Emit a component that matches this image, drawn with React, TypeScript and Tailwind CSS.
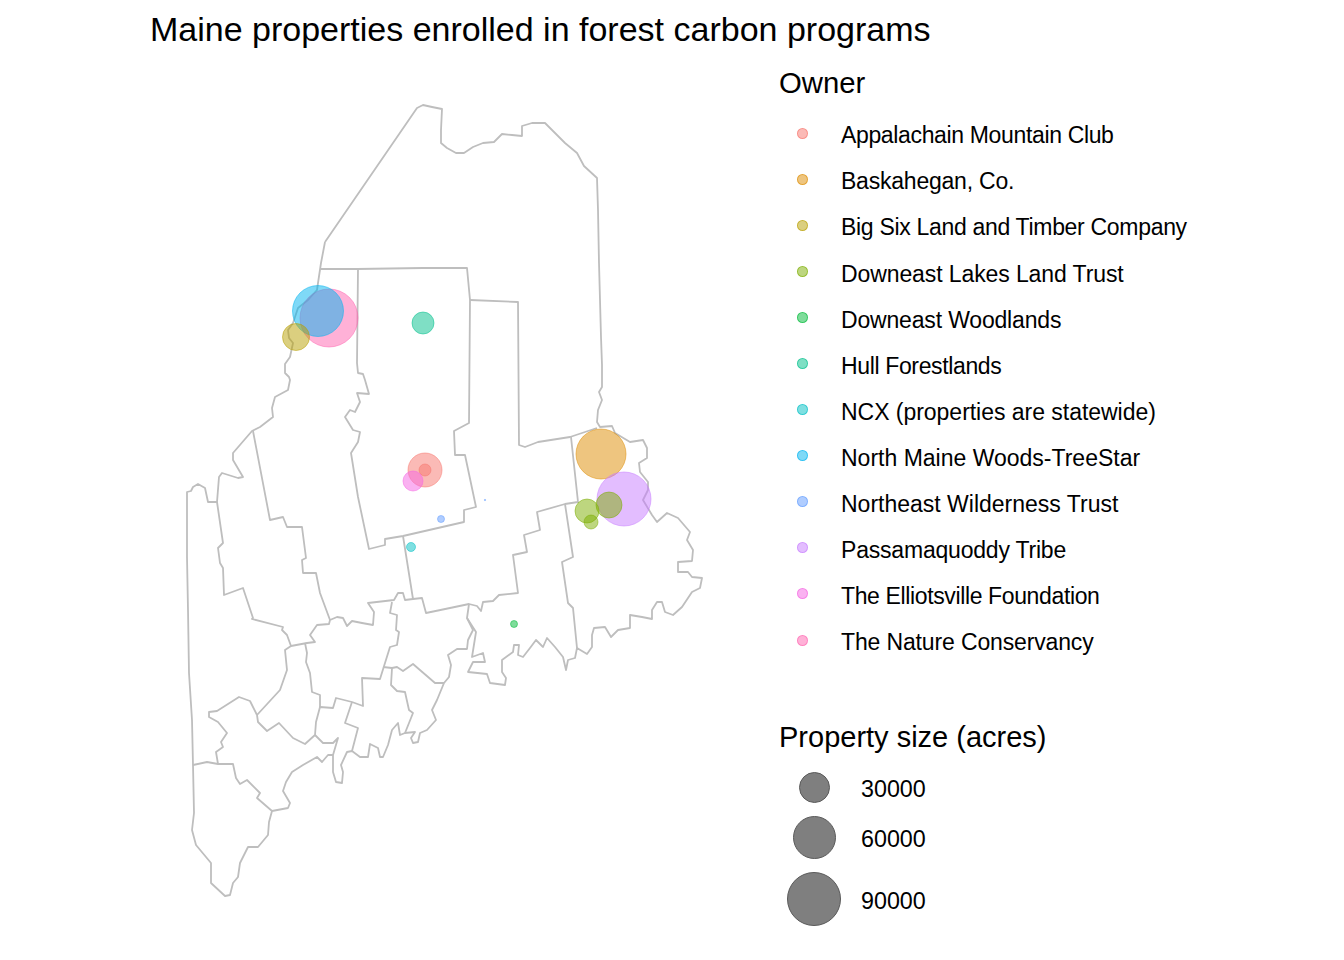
const borders = [
  // state outline, north and east
  "325,242 417,108 423,105 432,107 442,109 441,130 441,143 447,148 456,153 464,153 473,147 483,143 494,142 502,134 512,135 522,136 522,126 532,123 545,123 553,131 565,143 577,153 584,166 597,178 598,210 599,263 601,337 602,365 602,387 599,392 602,400 598,410 597,422 600,427 612,426 615,433 630,442 643,440 647,448 647,458 639,463 640,472 648,482 648,490 643,500 652,515 657,522 667,513 678,518 690,532 687,540 693,550 692,561 678,562 678,572 688,572 692,577 702,578 700,588 692,592 682,607 673,615 665,612 662,602 657,602 652,610 652,619 642,617 630,615 630,628 618,630 611,637 605,627 594,628 592,635 592,647 587,654 577,648 575,658 568,660 566,670 563,657 555,647 547,638 543,647 536,640 530,648 523,657 518,655 519,645 514,645 513,652 502,660 502,672 506,678 505,685 490,683 487,674 468,672 473,662 485,662 483,653 472,657 476,632 467,618 469,604",
  // state outline, west
  "325,242 321,263 318,283 317,290 308,300 298,308 293,323 288,330 289,338 293,343 290,357 285,364 285,373 289,377 290,380 288,390 275,397 272,408 273,417 260,427 252,431 233,453 233,460 243,477 238,478 222,473 219,477 217,502 208,502 205,488 198,484 193,487 191,491 187,492 187,557 188,610 189,673 192,720 193,765 194,813 192,830 196,845 211,863 211,883 225,896 230,895 233,883 238,877 240,863 248,847 258,847 268,835 269,822 272,811 288,808 290,803 283,791 286,782 292,772 303,765 317,757 322,762 328,755 333,755 333,772 336,782 342,783 343,772 341,765 347,752 352,751 360,757 368,757 370,744 378,748 380,757 383,757 388,745 392,730 398,723 400,735 405,733 415,732 411,738 413,743 418,742 420,733 427,730 436,720 432,710 437,700 444,683 449,677 451,665 448,655 457,649 467,649 468,640 473,630 467,618",
  // Somerset and Piscataquis
  "320,269 357,269 423,268 467,268 470,300 469,423 454,431 455,455 465,455 476,507 464,510 464,522 403,536 385,539 385,545 369,549 358,497 351,453 358,442 360,432 353,430 345,417 350,410 355,412 360,402 357,393 369,394 365,380 363,374 358,373 357,363 358,269",
  "470,300 518,302 519,445 525,447 538,442 570,437 597,428",
  "571,437 578,502 565,504 537,512 540,530 524,535 527,552 513,555 518,593 499,595 493,601 483,602 481,611 477,606 469,604 450,608 426,613 422,598 413,599 403,536",
  "565,504 573,557 562,562 568,603 573,608 577,648",
  "413,599 405,600 403,593 398,593 394,600 368,603 374,612 373,625 362,623 352,621 347,626 343,618 337,617 330,620 329,624 317,625 310,635 315,642 307,643 291,646 285,650 287,670 280,690 257,715",
  "253,431 270,520 283,517 287,527 302,527 306,558 302,560 303,573 316,573 320,593 330,620",
  "217,502 223,543 218,548 220,563 223,568 224,595 243,588 253,618 252,619 283,627 282,630 287,635 291,646",
  "392,602 390,613 397,615 396,630 399,632 397,645 390,647 380,679 362,678 363,706 352,702 336,698 333,708 320,707 316,722 315,735 305,744 293,738 279,723 267,731 258,722 257,715",
  "305,643 307,653 306,662 310,673 312,692 320,695 320,707",
  "352,702 345,723 358,728 352,751",
  "315,735 323,743 333,743 338,738 333,755",
  "383,667 392,668 391,685 397,691 405,692 409,710 413,713 407,728 405,733",
  "392,668 397,667 403,671 413,664 435,683 444,683",
  "193,765 207,762 218,764 233,764 236,778 240,784 247,780 260,793 257,798 272,811",
  "218,764 216,752 223,747 221,742 227,733 218,722 209,717 209,712 217,711 239,697 250,701 257,715",
]

const properties = [
  { cx: 329, cy: 318, r: 29, color: "#FF64B0" },
  { cx: 318, cy: 311, r: 25.5, color: "#00B4F0" },
  { cx: 296, cy: 337, r: 13.5, color: "#B79F00" },
  { cx: 423, cy: 323, r: 11, color: "#00C08B" },
  { cx: 425, cy: 470, r: 17, color: "#F8766D" },
  { cx: 425, cy: 470, r: 6, color: "#F8766D" },
  { cx: 413, cy: 481, r: 10, color: "#F564E3" },
  { cx: 441, cy: 519, r: 3.5, color: "#619CFF" },
  { cx: 485, cy: 500, r: 0.7, color: "#619CFF" },
  { cx: 411, cy: 547, r: 4.5, color: "#00BFC4" },
  { cx: 601, cy: 454, r: 25, color: "#DE8C00" },
  { cx: 624, cy: 499, r: 27, color: "#C77CFF" },
  { cx: 587, cy: 511, r: 12, color: "#7CAE00" },
  { cx: 609, cy: 505, r: 13, color: "#7CAE00" },
  { cx: 591, cy: 522, r: 7, color: "#7CAE00" },
  { cx: 514, cy: 624, r: 3.5, color: "#00BA38" },
]

const owners = [
  { name: "Appalachain Mountain Club", dot: "bg-[#F8766D]/50 border-[#F8766D]/60", track: "tracking-[-0.35px]" },
  { name: "Baskahegan, Co.", dot: "bg-[#DE8C00]/50 border-[#DE8C00]/60", track: "tracking-[-0.22px]" },
  { name: "Big Six Land and Timber Company", dot: "bg-[#B79F00]/50 border-[#B79F00]/60", track: "tracking-[-0.31px]" },
  { name: "Downeast Lakes Land Trust", dot: "bg-[#7CAE00]/50 border-[#7CAE00]/60", track: "tracking-[-0.1px]" },
  { name: "Downeast Woodlands", dot: "bg-[#00BA38]/50 border-[#00BA38]/60", track: "tracking-[-0.17px]" },
  { name: "Hull Forestlands", dot: "bg-[#00C08B]/50 border-[#00C08B]/60", track: "tracking-[-0.36px]" },
  { name: "NCX (properties are statewide)", dot: "bg-[#00BFC4]/50 border-[#00BFC4]/60", track: "tracking-[-0.03px]" },
  { name: "North Maine Woods-TreeStar", dot: "bg-[#00B4F0]/50 border-[#00B4F0]/60", track: "tracking-normal" },
  { name: "Northeast Wilderness Trust", dot: "bg-[#619CFF]/50 border-[#619CFF]/60", track: "tracking-normal" },
  { name: "Passamaquoddy Tribe", dot: "bg-[#C77CFF]/50 border-[#C77CFF]/60", track: "tracking-[-0.2px]" },
  { name: "The Elliotsville Foundation", dot: "bg-[#F564E3]/50 border-[#F564E3]/60", track: "tracking-[-0.37px]" },
  { name: "The Nature Conservancy", dot: "bg-[#FF64B0]/50 border-[#FF64B0]/60", track: "tracking-[-0.14px]" },
]

const sizes = [
  { label: "30000", row: "h-[50px]", dot: "w-[31px] h-[31px]" },
  { label: "60000", row: "h-[50px]", dot: "w-[43px] h-[43px]" },
  { label: "90000", row: "h-[74px]", dot: "w-[54px] h-[54px]" },
]

export default function App() {
  return (
    <div className="w-[1344px] h-[960px] overflow-hidden bg-white text-black font-['Liberation_Sans',sans-serif]">
      <h1 className="pl-[150px] h-[60px] pt-[9px] text-[34px] leading-[40px]">
        Maine properties enrolled in forest carbon programs
      </h1>
      <div className="flex">
        <svg width="540" height="860" viewBox="170 60 540 860" className="ml-[170px] shrink-0">
          <g fill="none" stroke="#bebebe" strokeWidth="1.8" strokeLinejoin="round">
            {borders.map((points, i) => (
              <polyline key={i} points={points} />
            ))}
          </g>
          {properties.map((p, i) => (
            <circle
              key={i}
              cx={p.cx}
              cy={p.cy}
              r={p.r}
              fill={p.color}
              fillOpacity="0.5"
              stroke={p.color}
              strokeOpacity="0.5"
            />
          ))}
        </svg>
        <div className="ml-[69px] flex flex-col">
          <div className="h-[40px] text-[29.3px] leading-[46px]">Owner</div>
          <ul className="mt-[11.5px]">
            {owners.map((o) => (
              <li key={o.name} className={`flex h-[46.1px] items-center text-[23px] ${o.track}`}>
                <span className="w-[62px] flex justify-center pr-[16px] -mt-[3px]">
                  <span className={`block w-[11px] h-[11px] rounded-full border ${o.dot}`} />
                </span>
                <span className="pt-[2px]">{o.name}</span>
              </li>
            ))}
          </ul>
          <div className="mt-[50.5px] h-[42px] text-[29px] leading-[45px]">Property size (acres)</div>
          <ul className="mt-[5px]">
            {sizes.map((s) => (
              <li key={s.label} className={`flex items-center text-[23.3px] ${s.row}`}>
                <span className="w-[70px] flex justify-center">
                  <span className={`block rounded-full bg-[#7f7f7f] border border-[#5a5a5a] ${s.dot}`} />
                </span>
                <span className="ml-[12px] pt-[4px]">{s.label}</span>
              </li>
            ))}
          </ul>
        </div>
      </div>
    </div>
  )
}
